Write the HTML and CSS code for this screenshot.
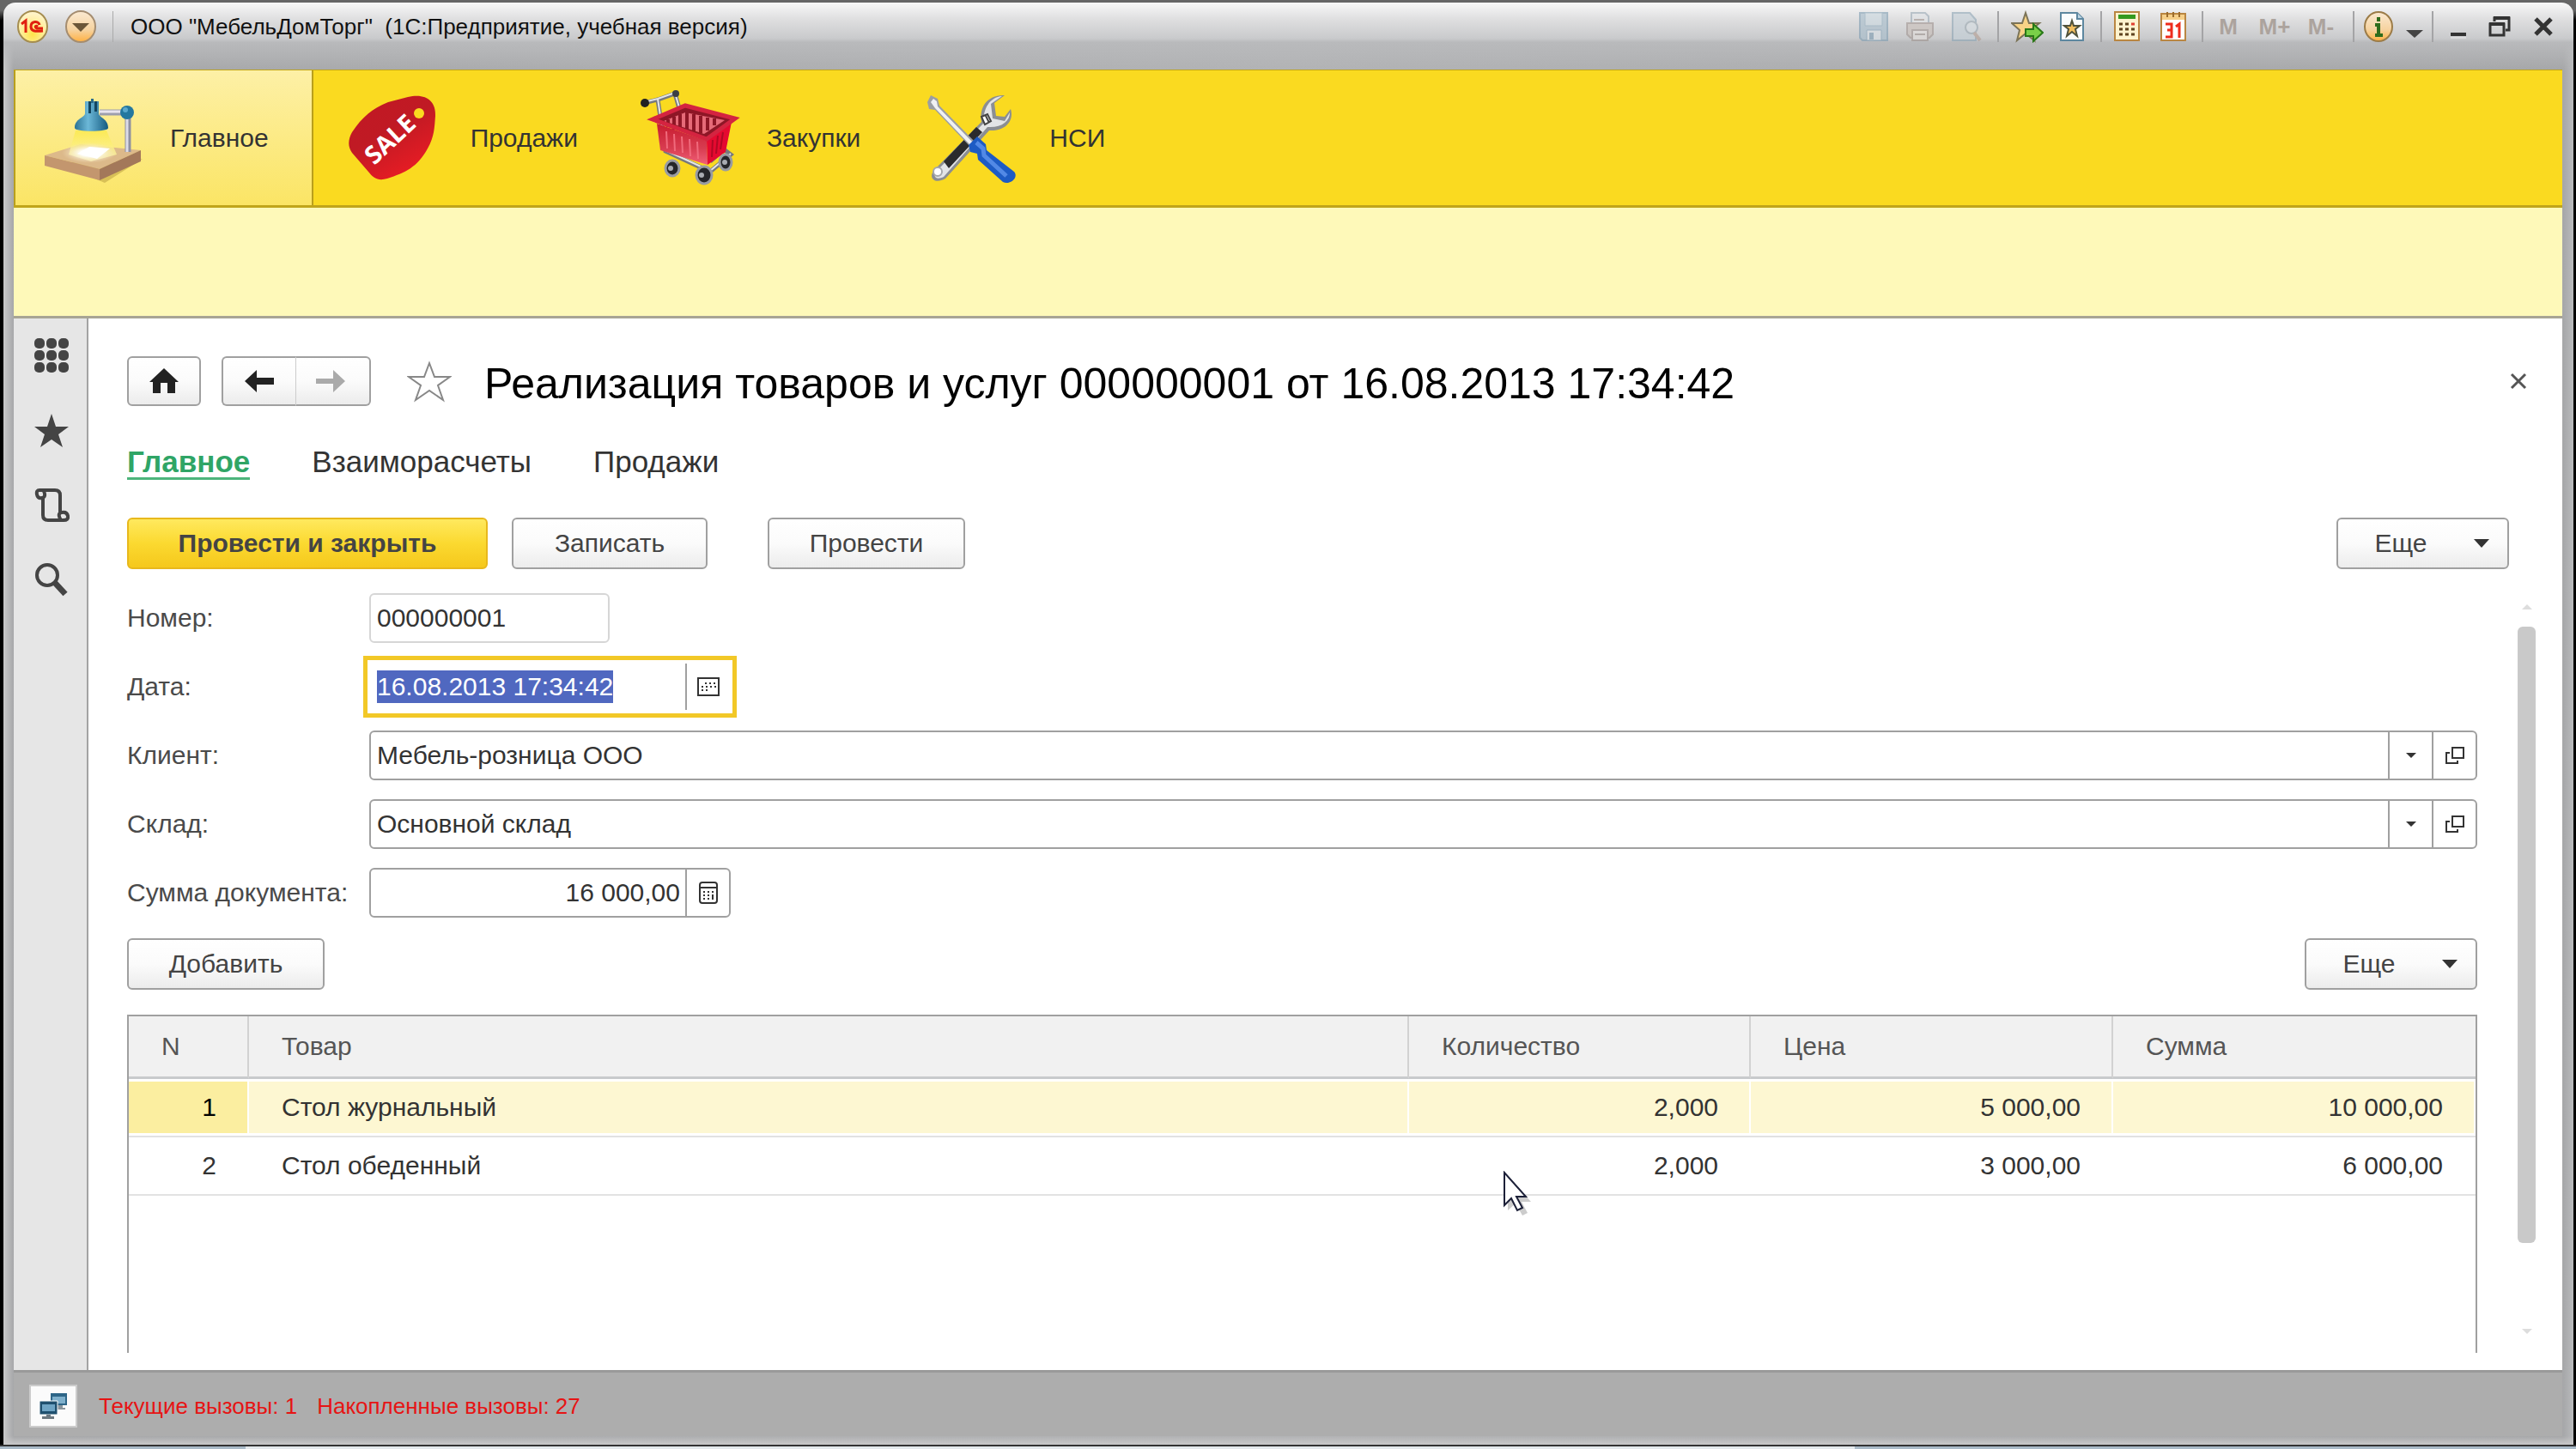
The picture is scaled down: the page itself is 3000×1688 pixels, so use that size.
FILE: index.html
```html
<!DOCTYPE html>
<html lang="ru">
<head>
<meta charset="utf-8">
<title>ООО "МебельДомТорг" (1С:Предприятие, учебная версия)</title>
<link rel="stylesheet" href="styles.css">
</head>
<body>
<div class="window">
  <header class="titlebar">
    <div class="titlebar-left">
      <button class="icon-btn" aria-label="1С">
        <svg width="38" height="40" viewBox="0 0 38 40"><defs><radialGradient id="gy" cx=".5" cy=".75" r=".8"><stop offset="0" stop-color="#ffe44a"/><stop offset=".5" stop-color="#ffee9a"/><stop offset="1" stop-color="#fff6dc"/></radialGradient></defs><ellipse cx="19" cy="20" rx="17" ry="18" fill="url(#gy)" stroke="#a58d50" stroke-width="2"/><path d="M6 17l5-4v14M27 18c-1-5-10-5-10 2 0 5 4 6 14 5M25 20c-3-2-4 1-1 2h7" fill="none" stroke="#e02010" stroke-width="3"/></svg>
      </button>
      <button class="icon-btn" aria-label="Главное меню">
        <svg width="38" height="40" viewBox="0 0 38 40"><defs><linearGradient id="go" x2="0" y2="1"><stop offset="0" stop-color="#fbead2"/><stop offset=".6" stop-color="#f6d3a0"/><stop offset="1" stop-color="#ffb040"/></linearGradient></defs><ellipse cx="19" cy="20" rx="17" ry="18" fill="url(#go)" stroke="#a58d70" stroke-width="2"/><path d="M9 16h20L19 26z" fill="#6b5638"/></svg>
      </button>
      <span class="title-text">ООО "МебельДомТорг"&nbsp; (1С:Предприятие, учебная версия)</span>
    </div>
    <div class="titlebar-right">
      <div class="tool-group">
        <button class="icon-btn faded" aria-label="Сохранить"><svg width="36" height="36" viewBox="0 0 36 36"><path d="M2 2h32v32H5l-3-3z" fill="#a5bccb" stroke="#7e9db2" stroke-width="2"/><path d="M8 2h20v15H8z" fill="#cad8e0" stroke="#8ba8ba"/><path d="M10 22h17v12H10z" fill="#dbe3e8" stroke="#7e9db2"/><path d="M13 25h5v8h-5z" fill="#7e9db2"/></svg></button>
        <button class="icon-btn faded" aria-label="Печать"><svg width="36" height="36" viewBox="0 0 36 36"><path d="M8 2h16l4 4v10H8z" fill="#e0e3e6" stroke="#9aaab6" stroke-width="2"/><path d="M3 14h30v13l-4 4H7l-4-4z" fill="#c8beb8" stroke="#a09490" stroke-width="2"/><path d="M9 22h18v12H9z" fill="#e4dfdc" stroke="#a09490" stroke-width="2"/><path d="M11 10h12M12 27h12" stroke="#a09490" stroke-width="2"/></svg></button>
        <button class="icon-btn faded" aria-label="Предварительный просмотр"><svg width="36" height="36" viewBox="0 0 36 36"><path d="M2 2h20l7 8v24H2z" fill="#c4d0d8" stroke="#8da5b5" stroke-width="2"/><circle cx="24" cy="19" r="7" fill="#d5dde2" stroke="#97a5ae" stroke-width="2"/><path d="M27 25l7 9" stroke="#b39c90" stroke-width="4"/></svg></button>
      </div>
      <div class="tool-group">
        <button class="icon-btn" aria-label="Добавить в избранное"><svg width="38" height="38" viewBox="0 0 38 38"><path d="M17 3l4 12h12l-10 8 4 12-10-8-10 8 3-12L1 15h12z" fill="#f8d386" stroke="#7c7458" stroke-width="2"/><path d="M17 22h9v-6l11 10-11 10v-6h-9z" fill="#7ad048" stroke="#287818" stroke-width="2"/></svg></button>
        <button class="icon-btn" aria-label="Избранное"><svg width="30" height="36" viewBox="0 0 30 36"><path d="M2 2h19l7 7v25H2z" fill="#fafcfd" stroke="#5d87a0" stroke-width="2"/><path d="M21 2v7h7" fill="#bcd4e2" stroke="#5d87a0" stroke-width="2"/><path d="M15 11l2 6h7l-5 4 2 8-6-5-6 5 2-8-5-4h7z" fill="#f3bf60" stroke="#50523c" stroke-width="2"/></svg></button>
      </div>
      <div class="tool-group tool-group-wide">
        <button class="icon-btn" aria-label="Калькулятор"><svg width="30" height="36" viewBox="0 0 30 36"><path d="M1 1h28v33H1z" fill="#fdf3cf" stroke="#b98642" stroke-width="2"/><path d="M5 4h20v5H5z" fill="#349a20"/><path d="M6 15h4m3 0h4M6 21h4m3 0h4M6 27h4m3 0h4m3 0h4m-4-6h4" stroke="#5e4420" stroke-width="3"/><path d="M20 15h4" stroke="#e04030" stroke-width="3"/></svg></button>
        <button class="icon-btn" aria-label="Календарь"><svg width="30" height="36" viewBox="0 0 30 36"><path d="M1 3h28v31H1z" fill="#fff" stroke="#b98642" stroke-width="2"/><path d="M2 4h26v6H2z" fill="#f6cf88"/><path d="M8 1v6m7-6v6m7-6v6" stroke="#9c6c2c" stroke-width="2"/><path d="M6 15h7v7H8h5v8H6M18 18l4-3v16" fill="none" stroke="#ee2c1c" stroke-width="3"/></svg></button>
      </div>
      <div class="tool-group tool-group-memory">
        <button class="memory-btn">M</button>
        <button class="memory-btn">M+</button>
        <button class="memory-btn">M-</button>
      </div>
      <div class="tool-group tool-group-info">
        <button class="icon-btn" aria-label="О программе"><svg width="36" height="38" viewBox="0 0 36 38"><ellipse cx="18" cy="19" rx="16" ry="17" fill="url(#go)" stroke="#9c7c48" stroke-width="2"/><path d="M18 8v5m-4 4h4v12m-4 0h9" fill="none" stroke="#2f6c1c" stroke-width="4"/></svg></button>
        <button class="icon-btn icon-low" aria-label="Еще команды"><svg width="20" height="10" viewBox="0 0 20 10"><path d="M0 1h20L10 10z" fill="#444"/></svg></button>
      </div>
      <div class="tool-group tool-group-window">
        <button class="icon-btn" aria-label="Свернуть"><svg width="18" height="28" viewBox="0 0 18 28"><path d="M0 21h18v4H0z" fill="#333"/><path d="M0 27h18" stroke="#eee"/></svg></button>
        <button class="icon-btn" aria-label="Восстановить"><svg width="26" height="28" viewBox="0 0 26 28"><path d="M7 8V4h17v14h-4M2 11h16v13H2z" fill="none" stroke="#333" stroke-width="3"/><path d="M6 4h19M1 11h18" stroke="#333" stroke-width="4"/></svg></button>
        <button class="icon-btn" aria-label="Закрыть программу"><svg width="24" height="28" viewBox="0 0 24 28"><path d="M3 5l18 18M21 5L3 23" stroke="#333" stroke-width="5"/></svg></button>
      </div>
    </div>
  </header>

  <div class="workspace">
    <nav class="sections">
      <a class="section section-active" href="#main">
        <svg width="140" height="112" viewBox="0 0 140 112">
          <defs>
            <linearGradient id="lamp" x2="1"><stop offset="0" stop-color="#2b7394"/><stop offset=".4" stop-color="#6cb8d8"/><stop offset="1" stop-color="#145a80"/></linearGradient>
            <linearGradient id="ray" x2="0" y2="1"><stop offset="0" stop-color="#fbe94a"/><stop offset="1" stop-color="#fdf6b0"/></linearGradient>
            <radialGradient id="glow"><stop offset=".3" stop-color="#fff"/><stop offset="1" stop-color="#f3e2b8" stop-opacity="0"/></radialGradient>
          </defs>
          <path d="M30 84l56 24 44-28-30 4z" fill="#b59a3c" opacity=".5"/>
          <path d="M16 76l42-13 70 7-48 22z" fill="#dcb98a"/><path d="M16 76l64 16v13L16 88z" fill="#c3966e"/><path d="M80 92l48-22v13l-48 22z" fill="#a3785a"/>
          <path d="M52 47h36l12 28-30 8-26-8z" fill="url(#ray)" opacity=".8"/>
          <ellipse cx="68" cy="73" rx="32" ry="12" fill="url(#glow)"/><path d="M54 74l14-8 24 2-15 12z" fill="#fff"/>
          <path d="M80 26h30" stroke="#9d9eac" stroke-width="7"/><path d="M80 25h30" stroke="#e8e4ee" stroke-width="3"/>
          <path d="M113 32v40" stroke="#8f90a0" stroke-width="7"/><path d="M112 32v40" stroke="#dcdce8" stroke-width="3"/>
          <circle cx="112" cy="26" r="8" fill="#24779f"/><circle cx="110" cy="23" r="3" fill="#5aa8cc"/>
          <path d="M63 13h16v14c0 5 11 6 11 17 0 5-39 5-39 0 0-11 12-12 12-17z" fill="url(#lamp)"/><path d="M67 13h3v14h-3zM74 13h3v12h-3z" fill="#14465f"/><path d="M70 10h3v5h-3z" fill="#2b6c8c"/>
        </svg>
        <span>Главное</span>
      </a>
      <a class="section" href="#sales">
        <svg width="141" height="112" viewBox="0 0 141 112">
          <defs><linearGradient id="tag" x2=".6" y2="1"><stop offset="0" stop-color="#c21824"/><stop offset=".5" stop-color="#c01a24"/><stop offset="1" stop-color="#e81c24"/></linearGradient></defs>
          <path d="M67 14L90 8c20-5 33 4 32 22-1 13-1 24-9 38-12 22-26 28-47 35-10 3-16 0-22-8L25 73c-5-7-5-15 0-24 12-18 23-27 42-35z" fill="url(#tag)"/>
          <circle cx="103" cy="27" r="6" fill="#fada20"/>
          <text x="70" y="67" class="sale-text" text-anchor="middle" transform="rotate(-43 70 58)">SALE</text>
        </svg>
        <span>Продажи</span>
      </a>
      <a class="section" href="#purchases">
        <svg width="125" height="112" viewBox="0 0 125 112">
          <defs><linearGradient id="basket" x2="0" y2="1"><stop offset="0" stop-color="#c81c30"/><stop offset=".6" stop-color="#d83c50"/><stop offset="1" stop-color="#f06078"/></linearGradient></defs>
          <path d="M4 15l16-4 20-7 7 24M20 11l9 60 52 24 24-20-8-6-16 14" fill="none" stroke="#77797d" stroke-width="5"/>
          <path d="M4 14l16-4 20-7 7 24M20 10l9 60 52 24 24-20" fill="none" stroke="#e4e5e8" stroke-width="2"/>
          <path d="M14 36l38-17 58 14-33 24z" fill="#8e1626"/><path d="M27 36l25-10 46 9-24 16z" fill="#e66a78"/><path d="M32 34v9m7-12v15m7-18v18m8-20v20m8-18v20m8-18v20m8-18v15m8-14v8" stroke="#8e1626" stroke-width="4"/>
          <path d="M19 39l58 20 1 28-55-17z" fill="url(#basket)"/><path d="M77 59l29-22-7 35-21 15z" fill="#e50a30"/><path d="M30 48l1 20m8-17l1 20m8-17l1 19m8-16l1 20m8-17l1 20" stroke="#f06a7c" stroke-width="2"/><path d="M84 58l-1 20m7-25l-2 21m8-25l-3 20" stroke="#b00824" stroke-width="2"/>
          <path d="M14 34l38-16 58 15-33 24z" fill="none" stroke="#d42440" stroke-width="5"/>
          <circle cx="5" cy="15" r="5" fill="#222"/><circle cx="41" cy="4" r="4" fill="#3c3f44"/>
          <g fill="#25262a" stroke="#999ca2" stroke-width="3"><ellipse cx="37" cy="91" rx="8" ry="9"/><ellipse cx="74" cy="99" rx="9" ry="10"/><ellipse cx="99" cy="84" rx="7" ry="9"/></g><g fill="#a9acb2"><circle cx="35" cy="91" r="3"/><circle cx="71" cy="99" r="3"/><circle cx="98" cy="84" r="3"/></g>
        </svg>
        <span>Закупки</span>
      </a>
      <a class="section" href="#reference">
        <svg width="125" height="112" viewBox="0 0 125 112">
          <path d="M16 90L68 37C65 20 75 5 95 6l-12 9 2 15 10 1 7-9c4 12-4 26-25 25L26 103c-14 8-22-3-10-13z" fill="#8b8e93"/>
          <path d="M17 93L71 38C69 22 78 8 92 7L79 16l2 17 14 3 6-10c0 10-9 18-26 17L24 101c-10 5-14-2-7-8z" fill="#e3e4e6"/>
          <path d="M24 83l38-40 7 6-39 42z" fill="#2b2b2d"/><circle cx="17" cy="95" r="5" fill="#fff" stroke="#a6a8ab" stroke-width="2"/>
          <path d="M68 31l7-3 4 8-7 4zM73 30l4 8" fill="#fff" stroke="#444" stroke-width="2"/>
          <path d="M5 14L9 6l8 4 2 8 41 42-5 6-41-43-7-1z" fill="#9b9ea3"/><path d="M9 14l3-4 4 3 1 6 41 42-3 3-41-43z" fill="#f0f1f3"/>
          <path d="M53 64l10-10 10 9 1 7 32 25c6 7-5 16-13 12L64 81l-1-7-8-2z" fill="#1d5bc4"/><path d="M62 61l8 7 1 8 26 24" fill="none" stroke="#5289e6" stroke-width="5"/>
        </svg>
        <span>НСИ</span>
      </a>
    </nav>
    <div class="subsections"></div>

    <div class="middle">
      <aside class="sidebar">
        <button class="icon-btn" aria-label="Меню функций"><svg width="42" height="44" viewBox="0 0 42 44"><g fill="#444"><rect x="1" y="1" width="12" height="12" rx="5"/><rect x="15" y="1" width="12" height="12" rx="5"/><rect x="29" y="1" width="12" height="12" rx="5"/><rect x="1" y="15" width="12" height="12" rx="5"/><rect x="15" y="15" width="12" height="12" rx="5"/><rect x="29" y="15" width="12" height="12" rx="5"/><rect x="1" y="29" width="12" height="12" rx="5"/><rect x="15" y="29" width="12" height="12" rx="5"/><rect x="29" y="29" width="12" height="12" rx="5"/></g></svg></button>
        <button class="icon-btn" aria-label="Избранное"><svg width="42" height="44" viewBox="0 0 42 44"><path d="M21 2l5 15h15L29 26l5 15-13-9-13 9 5-15L1 17h15z" fill="#444"/></svg></button>
        <button class="icon-btn" aria-label="История"><svg width="42" height="44" viewBox="0 0 42 44"><path d="M11 13V33q0 6 6 6h18q6 0 5-5t-7-4-1 9M31 30V10q0-6-6-6H7Q3 4 4 9t6 4 2-8" fill="none" stroke="#444" stroke-width="4"/></svg></button>
        <button class="icon-btn" aria-label="Поиск"><svg width="42" height="44" viewBox="0 0 42 44"><circle cx="16" cy="16" r="12" fill="none" stroke="#444" stroke-width="4"/><path d="M25 25l12 13" stroke="#444" stroke-width="7"/></svg></button>
      </aside>

      <main class="page">
        <div class="page-head">
          <button class="btn btn-home" aria-label="Начальная страница"><svg width="36" height="32" viewBox="0 0 36 32"><path d="M18 1l17 16h-4v13h-9V18h-8v12H5V17H1z" fill="#222"/></svg></button>
          <div class="nav-pair">
            <button class="btn" aria-label="Назад"><svg width="34" height="26" viewBox="0 0 34 26"><path d="M0 13L14 0v9h20v8H14v9z" fill="#222"/></svg></button>
            <button class="btn" aria-label="Вперед"><svg width="34" height="26" viewBox="0 0 34 26"><path d="M34 13L20 0v10H0v6h20v10z" fill="#aaa"/></svg></button>
          </div>
          <button class="icon-btn btn-star" aria-label="В избранное"><svg width="52" height="50" viewBox="0 0 52 50"><path d="M26 4l6 16h18L36 30l6 17-16-11-16 11 6-17L2 20h18z" fill="#fff" stroke="#888" stroke-width="2"/></svg></button>
          <h1>Реализация товаров и услуг 000000001 от 16.08.2013 17:34:42</h1>
          <button class="icon-btn btn-close" aria-label="Закрыть"><svg width="20" height="20" viewBox="0 0 20 20"><path d="M2 2l16 16M18 2L2 18" stroke="#555" stroke-width="3"/></svg></button>
        </div>

        <nav class="tabs">
          <a class="tab-active" href="#doc">Главное</a>
          <a href="#settlements">Взаиморасчеты</a>
          <a href="#doc-sales">Продажи</a>
        </nav>

        <div class="commands">
          <button class="btn btn-primary">Провести и закрыть</button>
          <button class="btn btn-write">Записать</button>
          <button class="btn btn-post">Провести</button>
          <button class="btn btn-more">Еще <svg width="18" height="10" viewBox="0 0 18 10"><path d="M0 0h18L9 10z" fill="#333"/></svg></button>
        </div>

        <div class="form-area">
          <form class="form">
            <div class="fields">
              <label for="number">Номер:</label>
              <div class="field field-number"><input id="number" value="000000001" readonly></div>

              <label for="date">Дата:</label>
              <div class="field field-short field-focus"><input id="date" value="16.08.2013 17:34:42"><button type="button" class="field-btn" aria-label="Выбрать дату"><svg width="26" height="22" viewBox="0 0 26 22"><rect x="1" y="1" width="24" height="20" fill="#fff" stroke="#333" stroke-width="2"/><path d="M9 7h13M5 11h17M5 15h9" stroke="#333" stroke-width="2" stroke-dasharray="2 3"/></svg></button></div>

              <label for="client">Клиент:</label>
              <div class="field"><input id="client" value="Мебель-розница ООО"><button type="button" class="field-btn" aria-label="Выбрать клиента"><svg width="12" height="6" viewBox="0 0 12 6"><path d="M0 0h12L6 6z" fill="#333"/></svg></button><button type="button" class="field-btn" aria-label="Открыть клиента"><svg width="24" height="24" viewBox="0 0 24 24"><path d="M9 3h13v12H9zM6 9H2v12h13v-3" fill="none" stroke="#333" stroke-width="2"/></svg></button></div>

              <label for="store">Склад:</label>
              <div class="field"><input id="store" value="Основной склад"><button type="button" class="field-btn" aria-label="Выбрать склад"><svg width="12" height="6" viewBox="0 0 12 6"><path d="M0 0h12L6 6z" fill="#333"/></svg></button><button type="button" class="field-btn" aria-label="Открыть склад"><svg width="24" height="24" viewBox="0 0 24 24"><path d="M9 3h13v12H9zM6 9H2v12h13v-3" fill="none" stroke="#333" stroke-width="2"/></svg></button></div>

              <label for="total">Сумма документа:</label>
              <div class="field field-short"><input id="total" class="num" value="16 000,00"><button type="button" class="field-btn" aria-label="Калькулятор суммы"><svg width="22" height="28" viewBox="0 0 22 28"><rect x="1" y="2" width="20" height="24" rx="3" fill="#fff" stroke="#333" stroke-width="2"/><path d="M1 8h20" stroke="#333" stroke-width="2"/><path d="M5 13h12M5 17h9M5 21h9" stroke="#333" stroke-width="2" stroke-dasharray="2 3"/><path d="M16 16v6" stroke="#333" stroke-width="2"/></svg></button></div>
            </div>

            <div class="table-commands">
              <button type="button" class="btn btn-add">Добавить</button>
              <button type="button" class="btn btn-more">Еще <svg width="18" height="10" viewBox="0 0 18 10"><path d="M0 0h18L9 10z" fill="#333"/></svg></button>
            </div>

            <div class="table-box">
              <table>
                <colgroup><col class="col-n"><col><col class="col-qty"><col class="col-price"><col class="col-sum"></colgroup>
                <thead><tr><th>N</th><th>Товар</th><th>Количество</th><th>Цена</th><th>Сумма</th></tr></thead>
                <tbody>
                  <tr class="selected"><td class="num cell-n">1</td><td>Стол журнальный</td><td class="num">2,000</td><td class="num">5 000,00</td><td class="num">10 000,00</td></tr>
                  <tr><td class="num cell-n">2</td><td>Стол обеденный</td><td class="num">2,000</td><td class="num">3 000,00</td><td class="num">6 000,00</td></tr>
                </tbody>
              </table>
            </div>
          </form>
          <div class="scrollbar">
            <svg width="12" height="6" viewBox="0 0 12 6"><path d="M0 6h12L6 0z" fill="#ddd"/></svg>
            <div class="scroll-track"><div class="scroll-thumb"></div></div>
            <svg width="12" height="6" viewBox="0 0 12 6"><path d="M0 0h12L6 6z" fill="#ddd"/></svg>
          </div>
        </div>
      </main>
    </div>

    <footer class="status">
      <button class="status-btn" aria-label="Соединение"><svg width="34" height="34" viewBox="0 0 34 34"><path d="M14 2h19v14H14z" fill="#2e6688"/><path d="M16 6h15v8H16z" fill="#7fb0cc"/><path d="M22 16h6v3h3v2h-9z" fill="#8a959c"/><path d="M1 11h21v16H1z" fill="#1f506f" stroke="#fff"/><path d="M4 15h15v8H4z" fill="#6ea4c4"/><path d="M9 27h5v2h4v3H4v-3h5z" fill="#6c7880"/></svg></button>
      <span>Текущие вызовы: 1</span>
      <span>Накопленные вызовы: 27</span>
    </footer>
  </div>
</div>
<div class="taskbar"></div>
<svg class="cursor" width="38" height="54" viewBox="0 0 38 54"><path d="M6 6v40l9-8 8 14 6-3-7-13h11z" fill="#000" opacity=".2"/><path d="M2 2v38l8-8 7 14 6-3-7-13h11z" fill="#fff" stroke="#1c2038" stroke-width="2"/></svg>
<script src="script.js"></script>
</body>
</html>
```
FILE: styles.css
```css
* { box-sizing: border-box; }
body {
  margin: 0;
  min-height: 100vh;
  display: flex;
  flex-direction: column;
  background: linear-gradient(#666 12px, #000 24px);
  font-family: "Liberation Sans", Arial, sans-serif;
  font-size: 30px;
  line-height: 38px;
  color: #333;
}
button, input { font: inherit; color: inherit; margin: 0; }
button { padding: 0; border: 0; background: none; }
a { color: inherit; text-decoration: none; }
svg { display: block; flex: none; }

.window {
  flex: 1;
  display: flex;
  flex-direction: column;
  margin: 3px 3px 0 4px;
  padding: 0 13px 10px 12px;
  border-radius: 14px 14px 0 0;
  background:
    linear-gradient(#f8f8f8 0, #dededf 20px, #c9cacc 42px, #b9babc 46px, rgba(184, 185, 187, 0) 78px) top / 100% 78px no-repeat,
    linear-gradient(rgba(200, 200, 201, 0), #c8c8c9) bottom / 100% 10px no-repeat,
    linear-gradient(90deg, #c9c9ca, #a6a7a9 12px, #b2b3b5 50%, #a6a7a9 calc(100% - 12px), #b9babc);
}

.titlebar { display: flex; justify-content: space-between; height: 78px; }
.titlebar-left, .titlebar-right { display: flex; align-items: center; height: 56px; }
.titlebar-left { gap: 18px; padding-left: 3px; }
.title-text { padding-left: 20px; border-left: 1px solid #aaa; font-size: 26px; line-height: 36px; color: #111; white-space: nowrap; }
.titlebar-right { padding-right: 10px; }
.icon-btn { display: flex; align-items: center; justify-content: center; }
.faded { opacity: .6; }
.tool-group { display: flex; align-items: center; gap: 18px; height: 36px; padding: 0 18px 0 14px; border-right: 2px solid #a4a4a6; }
.tool-group-wide { gap: 24px; }
.tool-group-memory { gap: 16px; padding-left: 10px; }
.tool-group-info { gap: 14px; padding: 0 10px; }
.tool-group-window { gap: 26px; padding: 0 0 0 20px; border: 0; }
.icon-low { padding-top: 16px; }
.memory-btn { width: 38px; font-size: 26px; font-weight: bold; color: #aca39d; }

.workspace { flex: 1; display: flex; flex-direction: column; background: #fff; }
.sections { display: flex; height: 161px; background: #fada20; border: 2px solid #c0a51a; border-width: 1px 0 3px; }
.section { display: flex; align-items: center; gap: 22px; padding: 0 53px 0 20px; }
.section-active { background: linear-gradient(#fdf0a6, #fbe565); border: solid #b99f1c; border-width: 0 2px; padding: 0 50px 0 18px; }
.sale-text { font: bold 29px "Open Sans", sans-serif; fill: #fff; }
.subsections { height: 129px; background: #fef9b9; border-bottom: 3px solid #a8a594; }

.middle { flex: 1; display: flex; }
.sidebar { width: 87px; display: flex; flex-direction: column; align-items: center; gap: 43px; padding: 22px 0 0 2px; background: #e6e6e6; border-right: 2px solid #a3a3a3; }

.page { flex: 1; min-width: 0; display: flex; flex-direction: column; padding: 44px 31px 20px 45px; }
.btn {
  display: flex; align-items: center; justify-content: center;
  height: 60px;
  border: 2px solid #a0a0a0; border-radius: 6px;
  background: linear-gradient(#fff, #fbfbfb 50%, #ececec);
  color: #444;
}
.page-head { display: flex; align-items: center; height: 58px; }
.page-head .btn { height: 58px; }
.btn-home { width: 86px; margin-right: 24px; }
.nav-pair { display: flex; margin-right: 42px; }
.nav-pair .btn { width: 87px; }
.nav-pair .btn:first-child { border-right: 1px solid #ccc; border-radius: 6px 0 0 6px; }
.nav-pair .btn:last-child { border-left: 0; border-radius: 0 6px 6px 0; padding-right: 6px; }
.btn-star { margin-right: 38px; }
h1 { flex: 1; margin: 0; padding-top: 6px; font-size: 50px; line-height: 58px; font-weight: normal; color: #000; white-space: nowrap; }
.btn-close { width: 40px; height: 40px; }

.tabs { display: flex; gap: 72px; margin-top: 46px; font-size: 35px; line-height: 38px; }
.tabs a { height: 40px; }
.tab-active { color: #2fa566; font-weight: bold; border-bottom: 3px solid #4db57c; }

.commands { display: flex; margin-top: 44px; padding-right: 31px; }
.btn-primary { width: 420px; margin-right: 28px; border-color: #e8b81c; background: linear-gradient(#ffe95e, #fbd930 50%, #f5c81c); font-weight: bold; }
.btn-write { width: 228px; margin-right: 70px; }
.btn-post, .btn-add { width: 230px; }
.btn-more { width: 201px; margin-left: auto; gap: 54px; padding-left: 21px; }

.form-area { flex: 1; display: flex; gap: 47px; margin-top: 28px; }
.form { flex: 1; min-width: 0; display: flex; flex-direction: column; }
.fields { display: grid; grid-template-columns: 282px 1fr; row-gap: 22px; align-items: center; color: #4a4a4a; }
.field { display: flex; height: 58px; border: 2px solid #a0a0a0; border-radius: 6px; background: #fff; color: #333; }
.field input { flex: 1; min-width: 0; border: 0; outline: 0; padding: 0 6px 0 7px; background: none; }
.field-number { width: 280px; border-color: #d6d6d6; }
.field-short { width: 421px; }
.field-focus { border-color: #fff; border-radius: 0; box-shadow: 0 0 0 2px #fff, 0 0 0 7px #f2c827; }
.field input::selection { background: #5068c0; color: #fff; }
.field-btn { display: flex; align-items: center; justify-content: center; width: 51px; border-left: 2px solid #a0a0a0; }
.num, .field .num { text-align: right; }

.table-commands { display: flex; margin-top: 24px; }
.table-box { flex: 1; margin-top: 29px; border: 2px solid #a0a0a0; border-bottom: 0; }
table { width: 100%; table-layout: fixed; border-collapse: separate; border-spacing: 0; }
.col-n { width: 140px; }
.col-qty { width: 398px; }
.col-price { width: 422px; }
.col-sum { width: 422px; }
th { height: 73px; padding: 0 38px; text-align: left; font-weight: normal; color: #555; background: #f1f1f1; border-right: 2px solid #d2d2d2; border-bottom: 3px solid #c8cacc; }
th:last-child { border-right: 0; }
td { height: 68px; padding: 0 38px; border-bottom: 2px solid #e2e2e2; }
.selected td { background: #fdf7d2; box-shadow: inset -2px 3px #fff, inset 0 -3px #fff; }
.selected .cell-n { background: #fbeea0; color: #000; }

.scrollbar { width: 21px; display: flex; flex-direction: column; align-items: center; gap: 20px; padding: 13px 0 22px; }
.scroll-track { flex: 1; width: 100%; }
.scroll-thumb { height: 90%; border-radius: 6px; background: #c9c9c9; }

.status { display: flex; align-items: center; gap: 23px; height: 77px; padding: 3px 18px 0; border-top: 3px solid #999; background: #adadad; font-size: 26px; color: #e61414; white-space: pre; }
.status-btn { display: flex; align-items: center; justify-content: center; width: 56px; height: 50px; background: #fbfbfb; border: 2px solid #ccc; margin-right: 2px; }
.taskbar { height: 5px; border-top: 2px solid #333; background: linear-gradient(90deg, #a9bac8 286px, #e4e9ed 286px, #e4e9ed 72%, #a9bac8 72%); }
.cursor { position: absolute; left: 1750px; top: 1364px; pointer-events: none; }
```
FILE: script.js
```js
const dateInput = document.getElementById("date");
dateInput.focus();
dateInput.select();
```
